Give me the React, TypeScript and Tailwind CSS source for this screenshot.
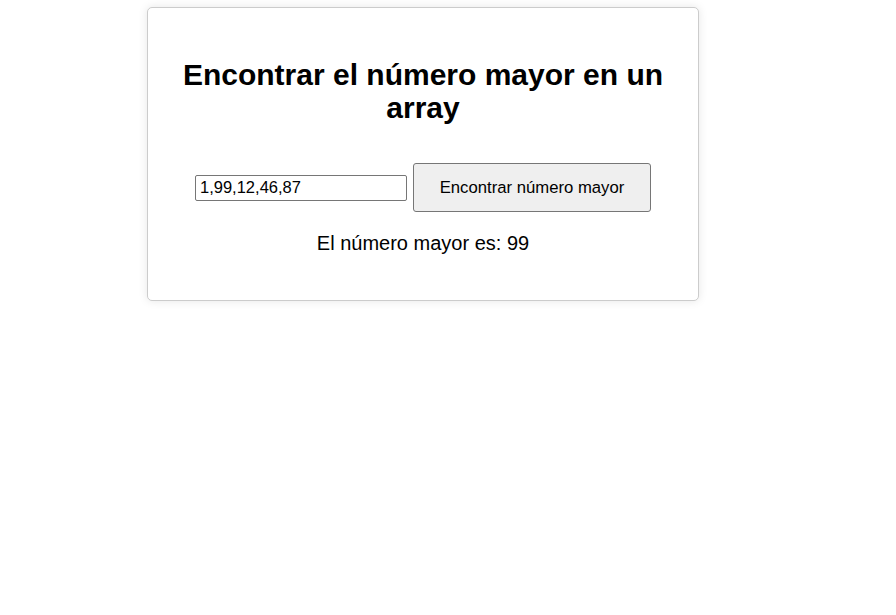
import React, { useState } from "react";

export default function App() {
  const [value, setValue] = useState("1,99,12,46,87");
  const [result, setResult] = useState("El número mayor es: 99");
  const find = () => {
    const nums = value.split(",").map((s) => Number(s.trim())).filter((n) => !isNaN(n));
    setResult("El número mayor es: " + Math.max(...nums));
  };
  return (
    <div className="min-h-[615px] bg-white pl-[147px] pt-[7px]" style={{ fontFamily: '"Liberation Sans", Arial, sans-serif' }}>
      <div className="w-[552px] h-[294px] rounded-[5px] border border-[#cccccc] bg-white shadow-[0_0_10px_rgba(0,0,0,0.1)] px-[20px] pt-[50px] text-center text-black">
        <h1 className="text-[30px] font-bold leading-[33px] m-0">Encontrar el número mayor en un array</h1>
        <div className="mt-[39px] flex items-center justify-center gap-[6px]">
          <input
            value={value}
            onChange={(e) => setValue(e.target.value)}
            className="w-[212px] h-[26px] border border-[#767676] rounded-[2px] px-[4px] text-[16.5px] text-black outline-none"
          />
          <button
            onClick={find}
            className="w-[238px] h-[49px] border border-[#767676] rounded-[3px] bg-[#efefef] text-[16.7px] text-black"
          >
            Encontrar número mayor
          </button>
        </div>
        <p className="mt-[19px] text-[20px] leading-[24px]">{result}</p>
      </div>
    </div>
  );
}
